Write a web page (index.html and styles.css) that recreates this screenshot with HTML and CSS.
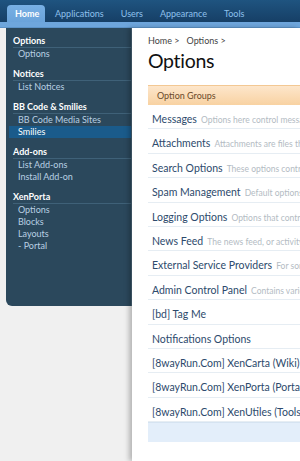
FILE: index.html
```html
<!DOCTYPE html>
<html lang="en">
<head>
    <meta charset="UTF-8">
    <meta name="viewport" content="width=device-width, initial-scale=1.0">
    <title>Options</title>
    <link rel="stylesheet" href="styles.css">
</head>
<body>
    <div class="header">
        <div class="tabs">
            <a class="tab active">Home</a>
            <a class="tab">Applications</a>
            <a class="tab">Users</a>
            <a class="tab">Appearance</a>
            <a class="tab">Tools</a>
        </div>
    </div>
    <div class="subbar"></div>

    <div class="layout">
        <div class="side-col">
            <div class="sidebar">
                <div class="section">
                    <div class="section-title">Options</div>
                    <a class="link">Options</a>
                </div>
                <div class="section">
                    <div class="section-title">Notices</div>
                    <a class="link">List Notices</a>
                </div>
                <div class="section">
                    <div class="section-title">BB Code &amp; Smilies</div>
                    <a class="link">BB Code Media Sites</a>
                    <a class="link selected">Smilies</a>
                </div>
                <div class="section">
                    <div class="section-title">Add-ons</div>
                    <a class="link">List Add-ons</a>
                    <a class="link">Install Add-on</a>
                </div>
                <div class="section">
                    <div class="section-title">XenPorta</div>
                    <a class="link">Options</a>
                    <a class="link">Blocks</a>
                    <a class="link">Layouts</a>
                    <a class="link">- Portal</a>
                </div>
            </div>
        </div>

        <div class="main">
            <div class="breadcrumb">
                <span>Home &gt;</span>
                <span>Options &gt;</span>
            </div>
            <h1 class="title">Options</h1>

            <div class="groups">
                <div class="groups-head">Option Groups</div>
                <div class="row"><span class="row-title">Messages</span> <span class="row-desc">Options here control messages and how they are displayed.</span></div>
                <div class="row"><span class="row-title">Attachments</span> <span class="row-desc">Attachments are files that users upload with messages.</span></div>
                <div class="row"><span class="row-title">Search Options</span> <span class="row-desc">These options control the search system.</span></div>
                <div class="row"><span class="row-title">Spam Management</span> <span class="row-desc">Default options for managing spam.</span></div>
                <div class="row"><span class="row-title">Logging Options</span> <span class="row-desc">Options that control logging.</span></div>
                <div class="row"><span class="row-title">News Feed</span> <span class="row-desc">The news feed, or activity stream, shows recent actions.</span></div>
                <div class="row"><span class="row-title">External Service Providers</span> <span class="row-desc">For some features, external services are used.</span></div>
                <div class="row"><span class="row-title">Admin Control Panel</span> <span class="row-desc">Contains various options for the control panel.</span></div>
                <div class="row"><span class="row-title">[bd] Tag Me</span></div>
                <div class="row"><span class="row-title">Notifications Options</span></div>
                <div class="row"><span class="row-title">[8wayRun.Com] XenCarta (Wiki)</span></div>
                <div class="row"><span class="row-title">[8wayRun.Com] XenPorta (Portal)</span></div>
                <div class="row"><span class="row-title">[8wayRun.Com] XenUtiles (Tools)</span></div>
                <div class="groups-foot"></div>
            </div>
        </div>
    </div>
</body>
</html>
```

FILE: styles.css
```css
* {
    margin: 0;
    padding: 0;
    box-sizing: border-box;
}

body {
    font-family: 'Lato', 'Liberation Sans', sans-serif;
    background: #f0f0f0;
    width: 300px;
    height: 461px;
    overflow: hidden;
}

.header {
    height: 22px;
    background: linear-gradient(#1f5480, #163f66);
}

.tabs {
    display: flex;
    padding-left: 7px;
    padding-top: 5px;
}

.tab {
    height: 17px;
    line-height: 18px;
    padding: 0 8px;
    margin-right: 1px;
    font-size: 9px;
    color: #8ec0ec;
    white-space: nowrap;
}

.tab.active {
    background: linear-gradient(#78b0e4, #6aa3da);
    color: white;
    font-weight: bold;
    border-radius: 4px 4px 0 0;
    width: 38px;
    margin-right: 2px;
}

.subbar {
    height: 6px;
    background: #6ea6dc;
    border-bottom: 1px solid #5c93c8;
}

.layout {
    display: flex;
    height: 433px;
}

.side-col {
    width: 132px;
    flex-shrink: 0;
    padding-left: 6px;
}

.sidebar {
    background: #2b485c;
    border-radius: 0 0 0 6px;
    padding: 7px 0 54px 0;
    border-right: 1px solid #4a6578;
}

.section {
    margin-bottom: 8px;
}

.section:last-child {
    margin-bottom: 0;
}

.section-title {
    font-size: 9px;
    font-weight: bold;
    color: white;
    line-height: 12px;
    margin-left: 7px;
    border-bottom: 1px solid #3f6178;
}

.link {
    display: block;
    font-size: 9px;
    line-height: 12px;
    color: #b9d0e3;
    padding-left: 12px;
}

.link.selected {
    background: #1a5b8b;
    color: white;
    margin-left: 3px;
    padding-left: 9px;
}

.main {
    flex: 1;
    min-width: 0;
    background: white;
    box-shadow: -3px 0 5px rgba(0, 0, 0, 0.25);
    padding: 7px 0 0 16px;
}

.breadcrumb {
    font-size: 9px;
    line-height: 12px;
    color: #444;
    display: flex;
    gap: 7px;
}

.title {
    font-size: 19.5px;
    font-weight: normal;
    color: #111;
    line-height: 22px;
    margin-top: 3px;
    letter-spacing: -0.3px;
}

.groups {
    margin-top: 13px;
    width: 180px;
}

.groups-head {
    height: 20px;
    line-height: 20px;
    font-size: 9px;
    color: #6b4a2a;
    padding-left: 9px;
    background: linear-gradient(#fde6cb, #f8d2a2);
    border-top: 1px solid #f3c893;
}

.row {
    height: 24.4px;
    line-height: 24px;
    padding-left: 4px;
    border-bottom: 1px solid #e6edf3;
    white-space: nowrap;
    overflow: hidden;
}

.row-title {
    font-size: 10.5px;
    color: #2d4a6c;
}

.row-desc {
    font-size: 8.5px;
    color: #b3bbc3;
}

.groups-foot {
    height: 20px;
    background: #e3eefa;
    border-top: 1px solid #d5e3f1;
}
```
